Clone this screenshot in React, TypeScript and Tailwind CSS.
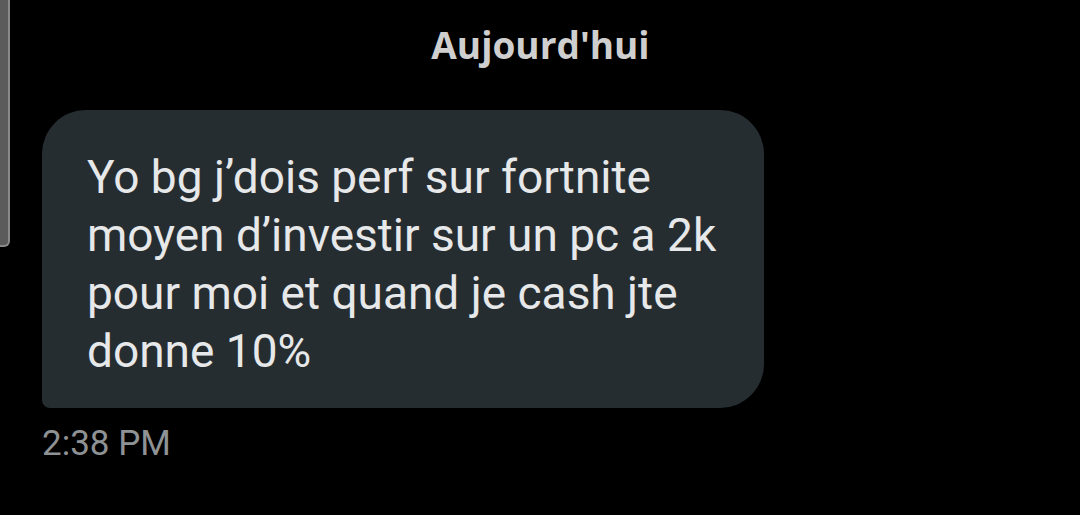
import React from 'react';

function App() {
  return (
    <div className="relative w-[1080px] h-[515px] bg-black overflow-hidden" style={{ fontFamily: 'Roboto, "Open Sans", sans-serif' }}>
      {/* scrollbar sliver on the left */}
      <div className="absolute left-0 top-0 w-[10px] h-[247px] bg-[#5b5b5b] border-r-2 border-b-2 border-[#8a8a8a] rounded-br-[6px]" />

      <div className="flex flex-col pt-[22px] pl-[42px]">
        <div className="flex justify-center w-[997px]">
          <span className="text-[37px] leading-[46px] font-bold text-[#cfcfcf]" style={{ fontFamily: '"Open Sans", sans-serif' }}>
            Aujourd'hui
          </span>
        </div>

        <div className="mt-[42px] w-[722px] h-[298px] bg-[#262d31] rounded-[44px] rounded-bl-[8px] pl-[45px] pt-[38px]">
          <p className="text-[46px] leading-[58px] text-[#e6e8e9]">
            Yo bg j’dois perf sur fortnite
            <br />
            moyen d’investir sur un pc a 2k
            <br />
            pour moi et quand je cash jte
            <br />
            donne 10%
          </p>
        </div>

        <div className="mt-[18px] text-[35px] leading-[36px] text-[#8e9295]">2:38 PM</div>
      </div>
    </div>
  );
}

export default App;
